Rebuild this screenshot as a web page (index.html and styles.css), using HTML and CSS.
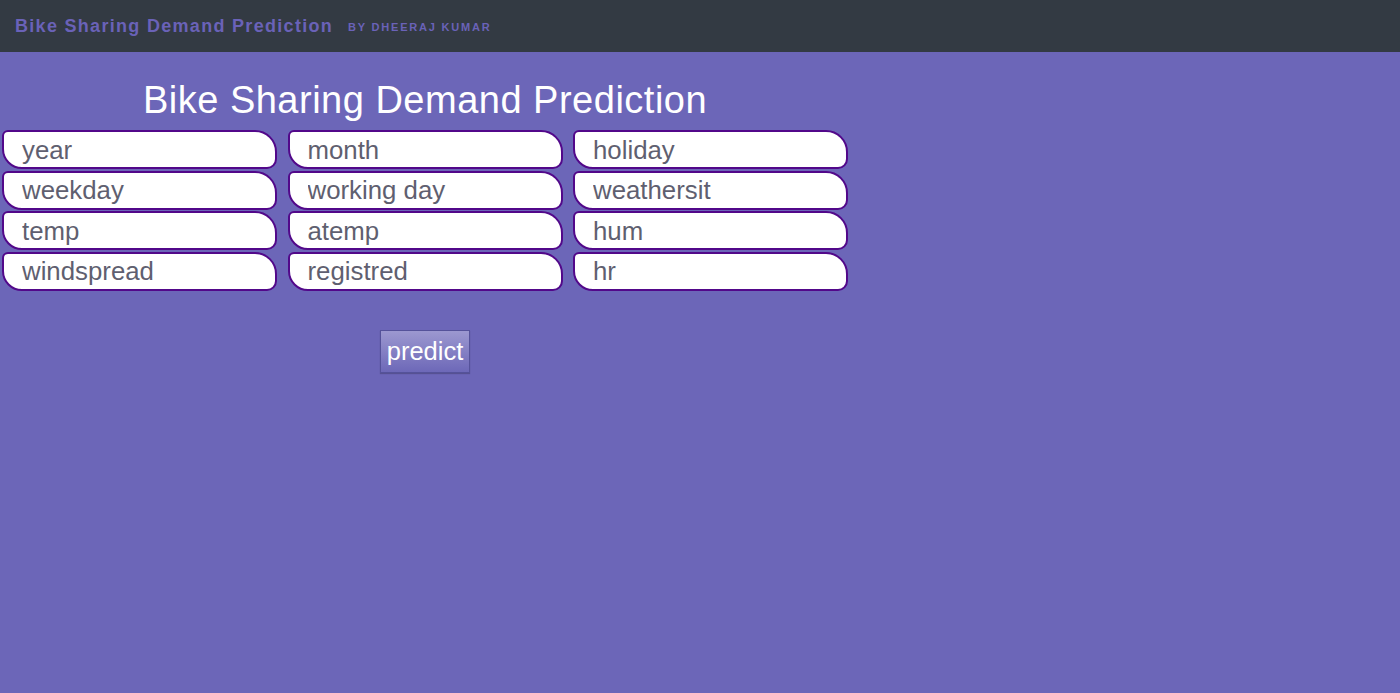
FILE: index.html
```html
<!DOCTYPE html>
<html>
<head>
<meta charset="utf-8">
<link rel="stylesheet" href="styles.css">
</head>
<body>
<header class="navbar">
  <span class="brand">Bike Sharing Demand Prediction</span>
  <span class="byline">BY DHEERAJ KUMAR</span>
</header>
<main class="login">
  <h1 class="title">Bike Sharing Demand Prediction</h1>
  <form class="fields">
    <input type="text" placeholder="year">
    <input type="text" placeholder="month">
    <input type="text" placeholder="holiday">
    <input type="text" placeholder="weekday">
    <input type="text" placeholder="working day">
    <input type="text" placeholder="weathersit">
    <input type="text" placeholder="temp">
    <input type="text" placeholder="atemp">
    <input type="text" placeholder="hum">
    <input type="text" placeholder="windspread">
    <input type="text" placeholder="registred">
    <input type="text" placeholder="hr">
  </form>
  <div class="actions">
    <button class="btn" type="button">predict</button>
  </div>
</main>
</body>
</html>
```
FILE: styles.css
```css
html, body {
  margin: 0;
  padding: 0;
}
body {
  background: #6c66b8;
  font-family: "Liberation Sans", Arial, sans-serif;
  min-height: 693px;
}
.navbar {
  height: 52px;
  background: #333a43;
  display: flex;
  align-items: center;
  padding-left: 15px;
  box-sizing: border-box;
}
.brand {
  color: #6a62b8;
  font-weight: bold;
  font-size: 18px;
  letter-spacing: 1.3px;
}
.byline {
  color: #6a62b8;
  font-weight: bold;
  font-size: 11px;
  letter-spacing: 1.8px;
  margin-left: 15px;
  margin-top: 1px;
}
.login {
  width: 850px;
}
.title {
  margin: 0;
  padding-top: 26px;
  height: 52px;
  text-align: center;
  color: #ffffff;
  font-weight: normal;
  font-size: 38px;
  line-height: 44px;
  letter-spacing: 0.5px;
}
.fields {
  display: grid;
  grid-template-columns: repeat(3, 275px);
  column-gap: 10.5px;
  row-gap: 1.67px;
  padding-left: 2px;
  margin: 0;
}
.fields input {
  box-sizing: border-box;
  width: 275px;
  height: 39px;
  border: 2px solid #52088a;
  border-radius: 6px 22px 10px 20px;
  background: #ffffff;
  padding: 1px 0 0 18px;
  font-family: "Liberation Sans", Arial, sans-serif;
  font-size: 25.8px;
  outline: none;
}
.fields input::placeholder {
  color: #5f5f70;
  opacity: 1;
}
.actions {
  display: flex;
  justify-content: center;
  padding-top: 39px;
}
.btn {
  width: 90px;
  height: 43px;
  box-sizing: border-box;
  border: 1px solid #55529a;
  background: linear-gradient(#9c98d0, #6d68b8);
  color: #ffffff;
  font-family: "Liberation Sans", Arial, sans-serif;
  font-size: 25.5px;
  padding: 0;
  box-shadow: 0 1px 1px rgba(0,0,0,0.2);
}
```
